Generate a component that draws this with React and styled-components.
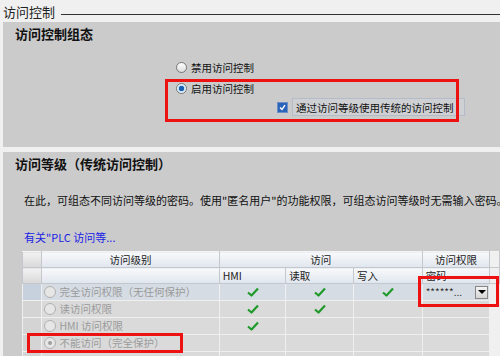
import React from 'react';
import styled, { createGlobalStyle } from 'styled-components';

const GlobalStyle = createGlobalStyle`
  body {
    margin: 0;
    background: #f0f0f0;
    font-family: "Noto Sans CJK SC", "Liberation Sans", sans-serif;
  }
`;

const Page = styled.div`
  width: 500px;
  height: 356px;
  overflow: hidden;
  background: #f0f0f0;
`;

const SectionHeader = styled.div`
  display: flex;
  align-items: center;
  height: 22px;
  padding-left: 3px;
  font-size: 13px;
  color: #222;
`;

const HeaderLine = styled.div`
  flex: 1;
  height: 0;
  margin: 6px 0 0 6px;
  border-top: 1px solid #333;
`;

const Panel = styled.div`
  margin-left: 3px;
  background: #cbcbcb;
  height: ${(p) => p.$h}px;
  margin-bottom: 5px;
  position: relative;
`;

const PanelTitle = styled.div`
  padding: 2px 0 0 12px;
  font-size: 13px;
  font-weight: bold;
  line-height: 20px;
  color: #111;
`;

const Options = styled.div`
  position: relative;
  margin: 13px 0 0 162px;
`;

const OptionRow = styled.div`
  display: flex;
  align-items: center;
  height: ${(p) => p.$h || 20}px;
  padding-left: ${(p) => p.$indent}px;
  font-size: 10.5px;
  color: #111;
  gap: 4px;
`;

const Radio = styled.span`
  width: ${(p) => p.$size || 11}px;
  height: ${(p) => p.$size || 11}px;
  border-radius: 50%;
  border: 1px solid ${(p) => (p.$disabled ? '#b0b0b0' : '#777')};
  background: ${(p) =>
    p.$disabled ? '#e6e6e6' : p.$on ? 'radial-gradient(circle, #1a5fb4 0 2.5px, #bfe3f7 3px, #fff 5px)' : 'linear-gradient(#fff, #dcdcdc)'};
  box-sizing: border-box;
  display: inline-flex;
  align-items: center;
  justify-content: center;
  flex-shrink: 0;
  &::after {
    content: '';
    display: ${(p) => (p.$disabled && p.$on ? 'block' : 'none')};
    width: 4px;
    height: 4px;
    border-radius: 50%;
    background: #a0a0a0;
  }
`;

const Checkbox = styled.span`
  width: 11px;
  height: 11px;
  background: #2a63b8;
  border: 1px solid #6a8fc8;
  box-sizing: border-box;
  display: inline-flex;
  align-items: center;
  justify-content: center;
  flex-shrink: 0;
`;

const CheckLabel = styled.span`
  display: flex;
  align-items: center;
  height: 16px;
  width: 168px;
  padding-left: 3px;
  border: 1px solid #b4bcc8;
  background: #cfd0d3;
`;

const Highlight = styled.div`
  position: absolute;
  left: ${(p) => p.$x}px;
  top: ${(p) => p.$y}px;
  width: ${(p) => p.$w}px;
  height: ${(p) => p.$h}px;
  border: 3px solid #ee1111;
  box-sizing: border-box;
  pointer-events: none;
  z-index: 2;
`;

const Description = styled.div`
  margin: 18px 0 0 21px;
  font-size: 11px;
  white-space: nowrap;
  overflow: hidden;
  color: #111;
`;

const HelpLink = styled.div`
  margin: 21px 0 0 21px;
  font-size: 11px;
  color: #1a22e6;
`;

const Table = styled.table`
  margin: 6px 0 0 19px;
  border-collapse: collapse;
  table-layout: fixed;
  font-size: 10.5px;
  line-height: 14px;
`;

const Th = styled.th`
  height: 15px;
  padding: 0 0 0 ${(p) => (p.$left ? 3 : 0)}px;
  font-weight: normal;
  text-align: ${(p) => (p.$left ? 'left' : 'center')};
  border: 1px solid #c4c8cc;
  border-top-color: #f4f4f4;
  background: ${(p) =>
    p.$stub ? 'linear-gradient(#f2f2f2, #d8d8d8)' : p.$blank ? '#f0f0f0' : 'linear-gradient(#f8f9fb, #e0e6ee)'};
  color: #222;
  overflow: hidden;
  white-space: nowrap;
`;

const Td = styled.td`
  height: 16px;
  padding: 0;
  border: 1px solid #efefef;
  background: ${(p) => (p.$stub ? (p.$sel ? '#c6d1dd' : '#d4d4d4') : p.$sel ? '#d6dce3' : p.$blank ? '#f0f0f0' : '#dadada')};
  text-align: ${(p) => (p.$left ? 'left' : 'center')};
  vertical-align: middle;
  white-space: nowrap;
  overflow: hidden;
`;

const LevelCell = styled.div`
  display: flex;
  align-items: center;
  height: 16px;
  gap: 3px;
  padding-left: 2px;
  color: #9a9a9a;
`;

const CheckWrap = styled.div`
  display: flex;
  align-items: center;
  justify-content: center;
  height: 16px;
`;

const PasswordCell = styled.div`
  display: flex;
  align-items: center;
  justify-content: space-between;
  height: 16px;
  padding-left: 3px;
  font-size: 10px;
  color: #333;
`;

const DropButton = styled.span`
  width: 13px;
  height: 13px;
  margin-right: 1px;
  border: 1px solid #888;
  background: linear-gradient(#f4f4f4, #d6d6d6);
  display: inline-flex;
  align-items: center;
  justify-content: center;
  box-sizing: border-box;
  &::after {
    content: '';
    border-left: 4px solid transparent;
    border-right: 4px solid transparent;
    border-top: 4px solid #000;
  }
`;

const Check = () => (
  <svg width="12" height="10" viewBox="0 0 12 10">
    <path d="M1 5.5 L4.5 8.5 L11 1.5" fill="none" stroke="#1f9a2a" strokeWidth="2.2" strokeLinejoin="round" />
  </svg>
);

const TickMark = () => (
  <svg width="7" height="7" viewBox="0 0 7 7">
    <path d="M1 3.5 L3 5.5 L6 1.2" fill="none" stroke="#fff" strokeWidth="1.4" />
  </svg>
);

const levels = [
  { name: '完全访问权限（无任何保护）', hmi: true, read: true, write: true, sel: true },
  { name: '读访问权限', hmi: true, read: true },
  { name: 'HMI 访问权限', hmi: true },
  { name: '不能访问（完全保护）', on: true },
  { name: '' },
];

export default function App() {
  return (
    <Page>
      <GlobalStyle />
      <SectionHeader>
        访问控制
        <HeaderLine />
      </SectionHeader>

      <Panel $h={125}>
        <PanelTitle>访问控制组态</PanelTitle>
        <Options>
          <OptionRow $indent={11} $h={21}>
            <Radio />
            禁用访问控制
          </OptionRow>
          <OptionRow $indent={11} $h={20}>
            <Radio $on />
            启用访问控制
          </OptionRow>
          <OptionRow $indent={112} $h={18}>
            <Checkbox>
              <TickMark />
            </Checkbox>
            <CheckLabel>通过访问等级使用传统的访问控制</CheckLabel>
          </OptionRow>
          <Highlight $x={0} $y={22} $w={294} $h={43} />
        </Options>
      </Panel>

      <Panel $h={220}>
        <PanelTitle>访问等级（传统访问控制）</PanelTitle>
        <Description>
          在此，可组态不同访问等级的密码。使用"匿名用户"的功能权限，可组态访问等级时无需输入密码。相应访问等级
        </Description>
        <HelpLink>有关"PLC 访问等...</HelpLink>
        <Table>
          <colgroup>
            <col style={{ width: 20 }} />
            <col style={{ width: 178 }} />
            <col style={{ width: 68 }} />
            <col style={{ width: 69 }} />
            <col style={{ width: 70 }} />
            <col style={{ width: 68 }} />
            <col style={{ width: 10 }} />
          </colgroup>
          <thead>
            <tr>
              <Th $stub />
              <Th>访问级别</Th>
              <Th colSpan={3}>访问</Th>
              <Th>访问权限</Th>
              <Th $blank />
            </tr>
            <tr>
              <Th $stub />
              <Th />
              <Th $left>HMI</Th>
              <Th $left>读取</Th>
              <Th $left>写入</Th>
              <Th $left>密码</Th>
              <Th $blank />
            </tr>
          </thead>
          <tbody>
            {levels.map((l, i) => (
              <tr key={i}>
                <Td $stub $sel={l.sel} />
                <Td $sel={l.sel} $left>
                  {l.name && (
                    <LevelCell>
                      <Radio $disabled $on={l.on} $size={12} />
                      {l.name}
                    </LevelCell>
                  )}
                </Td>
                <Td $sel={l.sel}>{l.hmi && <CheckWrap><Check /></CheckWrap>}</Td>
                <Td $sel={l.sel}>{l.read && <CheckWrap><Check /></CheckWrap>}</Td>
                <Td $sel={l.sel}>{l.write && <CheckWrap><Check /></CheckWrap>}</Td>
                <Td $sel={l.sel} $left>
                  {l.sel && (
                    <PasswordCell>
                      ******...
                      <DropButton />
                    </PasswordCell>
                  )}
                </Td>
                <Td $blank />
              </tr>
            ))}
          </tbody>
        </Table>
        <Highlight $x={415} $y={124} $w={81} $h={31} />
        <Highlight $x={24} $y={181} $w={156} $h={20} />
      </Panel>
    </Page>
  );
}
